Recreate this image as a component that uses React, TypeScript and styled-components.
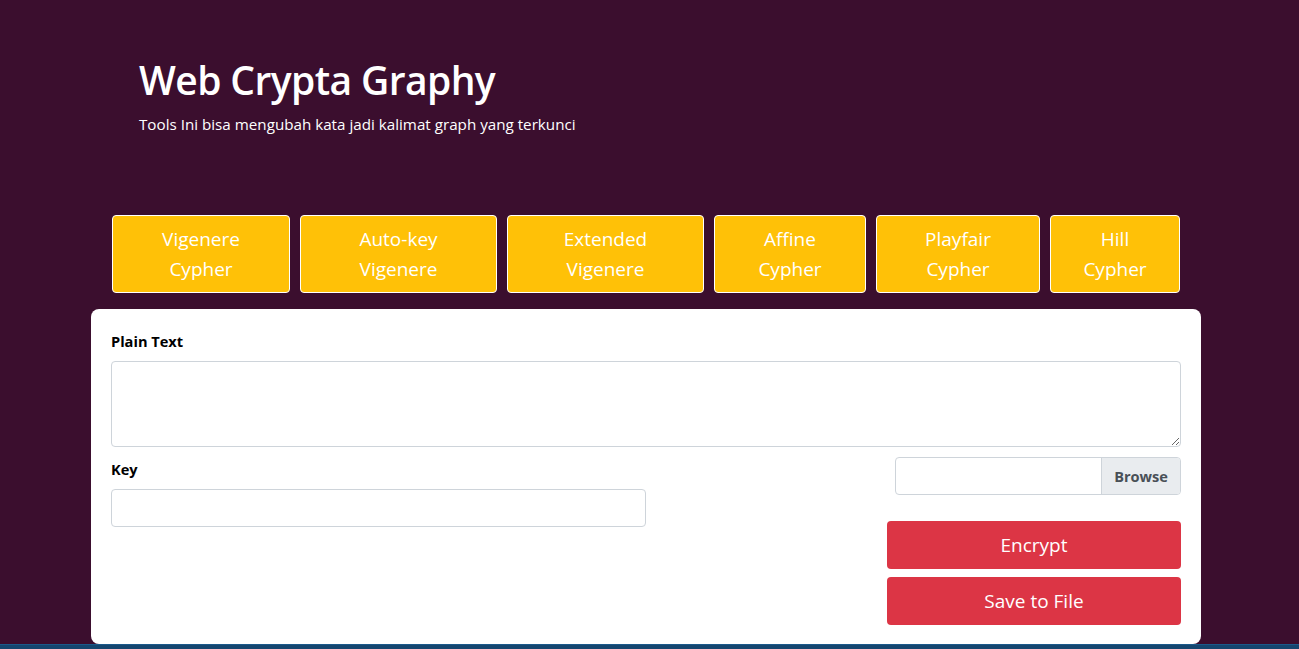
import React from "react";
import styled, { createGlobalStyle } from "styled-components";

const Global = createGlobalStyle`
  html, body { margin: 0; padding: 0; }
  body {
    background: #3b0e2e;
    font-family: "Open Sans", "Noto Sans", sans-serif;
    color: #212529;
  }
  * { box-sizing: border-box; }
`;

const Page = styled.div`
  display: flex;
  flex-direction: column;
  min-height: 649px;
`;

const Header = styled.header`
  padding: 56px 0 0 139px;
  height: 215px;
`;

const Title = styled.h1`
  margin: 0;
  font-size: 39px;
  font-weight: 600;
  line-height: 48px;
  color: #ffffff;
  letter-spacing: -0.6px;
`;

const Subtitle = styled.p`
  margin: 8px 0 0;
  font-size: 15.2px;
  line-height: 24px;
  color: #ffffff;
`;

const Tabs = styled.nav`
  display: flex;
  gap: 10px;
  padding-left: 112px;
`;

const Tab = styled.button<{ $w: number }>`
  width: ${(p) => p.$w}px;
  height: 78px;
  background: #ffc107;
  border: 1px solid #ffffff;
  border-radius: 4px;
  color: #ffffff;
  font-family: inherit;
  font-size: 19px;
  line-height: 30px;
  padding: 8px 16px;
  text-align: center;
`;

const Card = styled.main`
  margin: 16px 0 0 91px;
  width: 1110px;
  background: #ffffff;
  border-radius: 8px;
  padding: 20px 20px 19px;
`;

const Label = styled.label`
  display: block;
  font-weight: 700;
  font-size: 14.6px;
  line-height: 24px;
  color: #000;
  margin-bottom: 8px;
`;

const TextArea = styled.textarea`
  display: block;
  width: 100%;
  height: 86px;
  border: 1px solid #ced4da;
  border-radius: 4px;
  resize: vertical;
  margin: 0 0 10px;
  font-family: inherit;
`;

const Row = styled.div`
  display: flex;
  justify-content: space-between;
`;

const LeftCol = styled.div`
  width: 535px;
`;

const Input = styled.input`
  display: block;
  width: 100%;
  height: 38px;
  border: 1px solid #ced4da;
  border-radius: 4px;
`;

const RightCol = styled.div`
  width: 294px;
  display: flex;
  flex-direction: column;
  align-items: flex-end;
`;

const FileBox = styled.div`
  display: flex;
  width: 286px;
  height: 38px;
  border: 1px solid #ced4da;
  border-radius: 4px;
  overflow: hidden;
  margin-bottom: 26px;
`;

const FileField = styled.div`
  flex: 1;
`;

const Browse = styled.span`
  display: flex;
  align-items: center;
  padding: 0 12px;
  background: #e9ecef;
  border-left: 1px solid #ced4da;
  font-weight: 700;
  font-size: 14.6px;
  color: #495057;
`;

const ActionButton = styled.button`
  width: 100%;
  height: 48px;
  margin-bottom: 8px;
  background: #dc3545;
  border: none;
  border-radius: 4px;
  color: #ffffff;
  font-family: inherit;
  font-size: 19px;
  &:last-child { margin-bottom: 0; }
`;

const Footer = styled.footer`
  flex: 1;
  background: #15466f;
  border-top: 1px solid #1b5a8a;
`;

const tabs: [string, string, number][] = [
  ["Vigenere", "Cypher", 178],
  ["Auto-key", "Vigenere", 197],
  ["Extended", "Vigenere", 197],
  ["Affine", "Cypher", 152],
  ["Playfair", "Cypher", 164],
  ["Hill", "Cypher", 130],
];

export default function App() {
  return (
    <Page>
      <Global />
      <Header>
        <Title>Web Crypta Graphy</Title>
        <Subtitle>Tools Ini bisa mengubah kata jadi kalimat graph yang terkunci</Subtitle>
      </Header>
      <Tabs>
        {tabs.map(([a, b, w]) => (
          <Tab key={a + b} $w={w}>
            {a}
            <br />
            {b}
          </Tab>
        ))}
      </Tabs>
      <Card>
        <Label>Plain Text</Label>
        <TextArea />
        <Row>
          <LeftCol>
            <Label>Key</Label>
            <Input />
          </LeftCol>
          <RightCol>
            <FileBox>
              <FileField />
              <Browse>Browse</Browse>
            </FileBox>
            <ActionButton>Encrypt</ActionButton>
            <ActionButton>Save to File</ActionButton>
          </RightCol>
        </Row>
      </Card>
      <Footer />
    </Page>
  );
}
